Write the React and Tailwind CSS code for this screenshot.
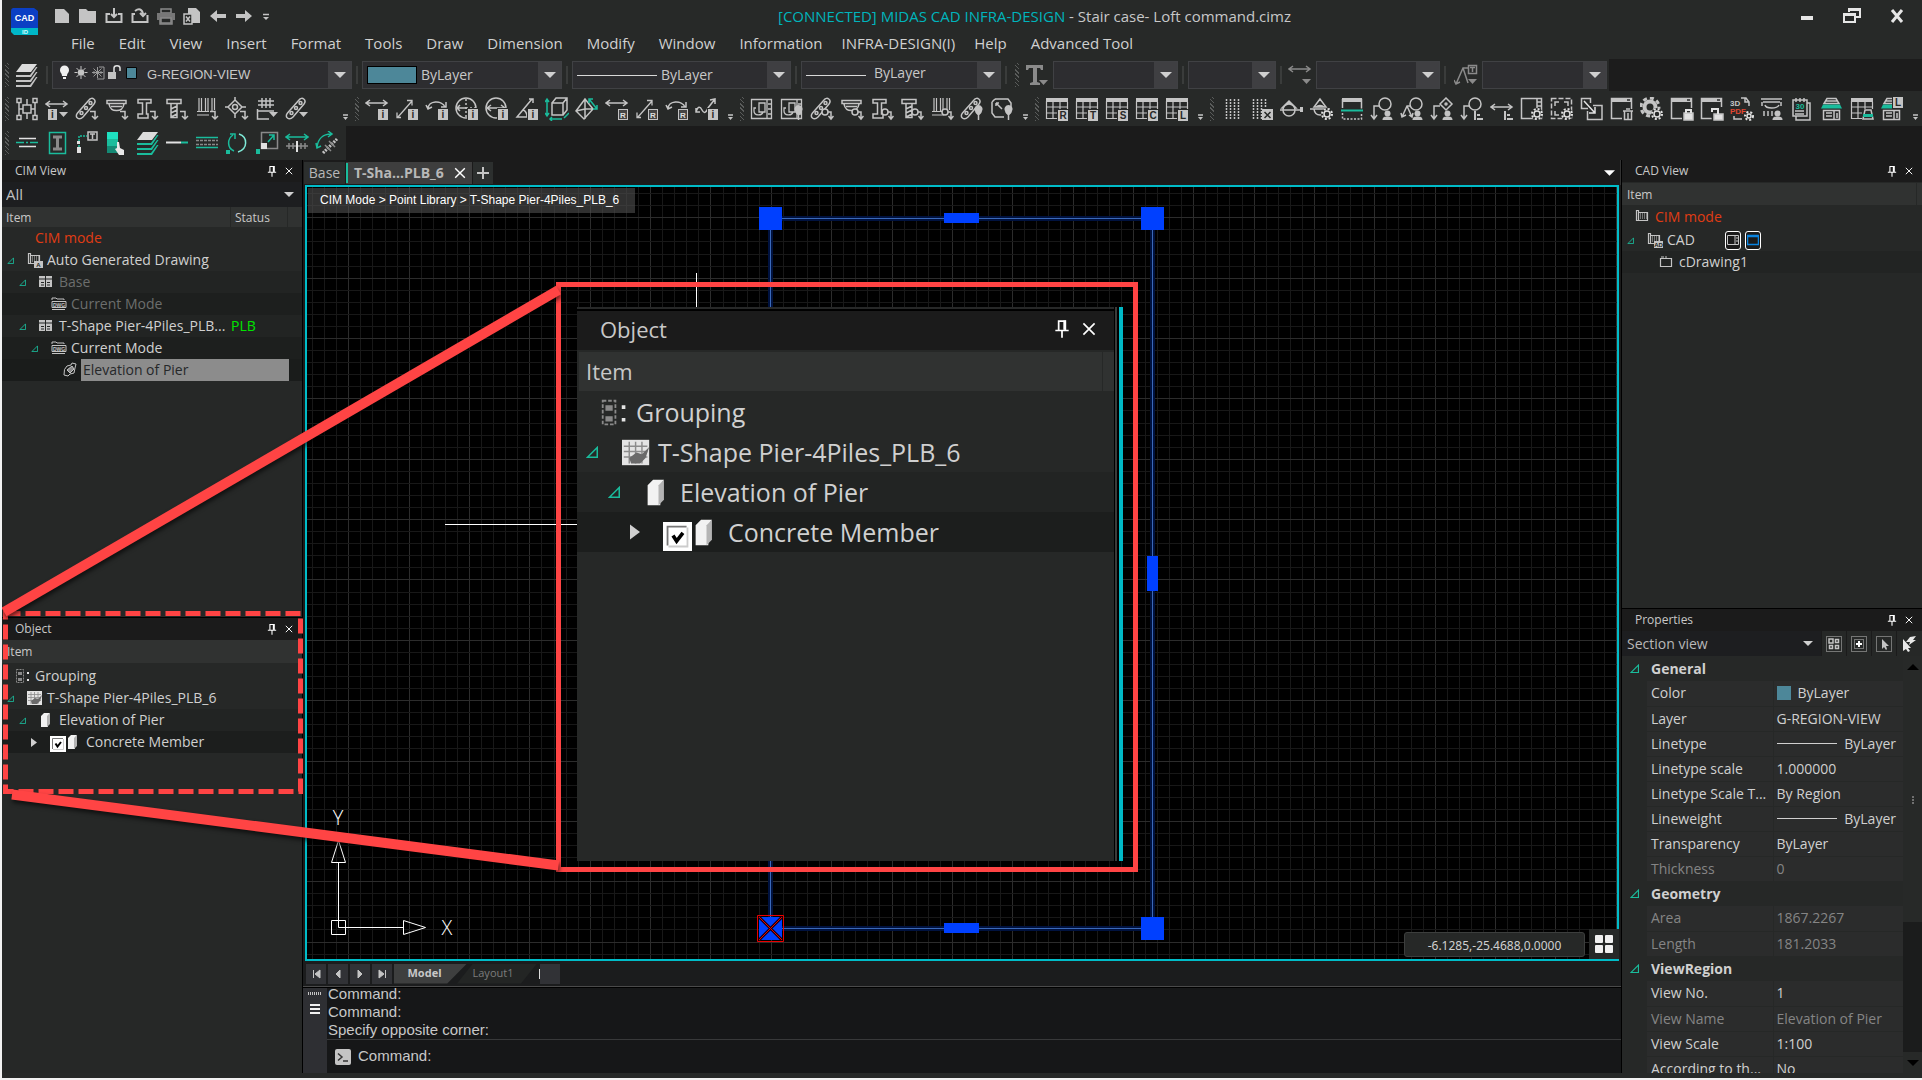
import React, { useState } from 'react';

const TEAL = '#1abc9c';
const GREY = '#c4c4c4';
const DIM = '#8a8a8a';

const Icon = ({ children, className = 'h-6 w-6', box = '0 0 24 24' }) => (
  <svg className={`shrink-0 ${className}`} viewBox={box} fill="none" stroke={GREY} strokeWidth="1.5" aria-hidden="true">
    {children}
  </svg>
);

/* ---------- small pieces shared by the toolbar icons ---------- */

const Hook = () => <path d="M15 14.500h5v7M17 19l3 3 3-3" />;
const DownTri = () => <path d="M14 15h9l-4.500 5z" fill={GREY} stroke="none" />;

const Badge = ({ letter, x = 13, y = 12, w = 10 }) => (
  <g stroke="none">
    <rect x={x - 1} y={y - 1} width={w + 2} height="13" fill="#272928" />
    <rect x={x} y={y} width={w} height="11" fill={GREY} />
    <text x={x + w / 2} y={y + 9} fontSize="10" fontWeight="700" fill="#272928" textAnchor="middle" fontFamily="Liberation Sans, sans-serif">{letter}</text>
  </g>
);

const Outlined = ({ letter }) => (
  <g>
    <rect x="13.5" y="12.500" width="9" height="10" fill="#444" strokeWidth="1" />
    <text x="18" y="20.500" fontSize="8" fontWeight="700" fill="#ddd" stroke="none" textAnchor="middle" fontFamily="Liberation Sans, sans-serif">{letter}</text>
  </g>
);

const Rod = () => (
  <g>
    <path d="M2.500 16 14 3c3-4 8 0 5 4L8 20c-4 4-9 0-5.500-4z" />
    <circle cx="6.500" cy="16" r="1.500" />
    <circle cx="11" cy="11" r="1.500" />
    <circle cx="15.500" cy="6" r="1.500" />
  </g>
);
const Tub = () => <path d="M2 3.500h19v3H2zM4 7c1 5 3 6.500 7.500 6.500S18 12 19 7M6 9.500h11" />;
const Beam = () => <path d="M3 2.500h13v3.500h-4.500v11H13v4H3v-4h4.500V6H3z" />;
const Screw = () => <path d="M2 2.500h14v4H2zM6 7v13.500h6V7M6 12l6-3M6 16l6-3M6 20l6-3" />;
const Piles = () => <path d="M4 1v13M6.500 1v13M10.500 1v13M13 1v13M17 1v13M19.500 1v12M2 14.500h12M2 18h12" strokeWidth="1.2" />;
const Node = () => (
  <g>
    <circle cx="15" cy="15" r="3" fill="#272928" />
    <path d="M18 15h3v6M18.500 19l2.500 3 2.500-3" />
  </g>
);
const Pin = () => (
  <g>
    <path d="M15 14a4 4 0 1 1 7 0c0 2-2 3-2.500 4h-2c-.5-1-2.500-2-2.500-4z" fill={GREY} stroke="none" />
    <path d="M18.500 18v5" />
  </g>
);
const Span = ({ y = 6 }) => <path d={`M1 ${y}h21M5 ${y - 3}l-4 3 4 3M18 ${y - 3}l4 3-4 3`} />;
const Diag = () => <path d="M3 20 17 4M12 3.500h5v5M2 15.500v5h4" strokeWidth="1.3" />;
const ArcArrow = () => <path d="M3 12c0-9 14-9 17-2M1 8l2 4 4-2M21 5v5h-5" />;
const Person = () => (
  <g stroke="none" fill={GREY}>
    <circle cx="17.500" cy="16.500" r="3" />
    <path d="M12.500 23c0-3 2-3.500 5-3.500s5 .5 5 3.500z" />
  </g>
);
const AlignMark = () => <path d="M15 14v9M17 18h3M17 22h6" strokeWidth="2" />;
const MiniGear = ({ x = 17, y = 17, r = 3 }) => (
  <g>
    <circle cx={x} cy={y} r={r + 3} fill="#272928" stroke="none" />
    <circle cx={x} cy={y} r={r} strokeWidth="1.5" stroke="#e2e2e2" />
    <circle cx={x} cy={y} r={r + 2} strokeWidth="2" strokeDasharray="2 1.93" stroke="#e2e2e2" />
  </g>
);
const WindowFrame = () => (
  <g>
    <path d="M1.500 1.500h20v20h-20z" />
    <path d="M1 1h21v4H1z" fill={GREY} stroke="none" />
    <path d="M17 3h3" stroke="#272928" />
  </g>
);
const Trapezoid = () => (
  <g>
    <path d="M7 1.500h9l3 5H4zM6 4h11" />
    <path d="M3 7.500h17l2 4H1z" fill={TEAL} stroke="none" />
    <path d="M3.500 13.500h16v9h-16zM6 16h6M6 19h6M14 14v8M17 16v5" />
  </g>
);
const GridTable = () => (
  <g>
    <path d="M1 1h22v4H1z" fill={GREY} stroke="none" />
    <path d="M1.500 4v17.500H12M1 10h22M1 16h11M8 5v16M15 5v7M22.500 5v8" strokeWidth="1.2" />
  </g>
);
const Dots = () => <path d="M6.500 2v20M10.500 2v20M14.500 2v20M18.500 2v20" strokeDasharray="2 1" strokeWidth="1.5" />;
const Leader = () => <path d="M4 22V9h6M1 18l3 4 3-4" />;

/* ---------- toolbar groups ---------- */

const drawTools = [
  ['Column grid', <path d="M2 1.500h4v4H2zM18 1.500h4v4h-4zM2 18.500h4v4H2zM18 18.500h4v4h-4zM4 6v12M20 6v12M8 8h8v8H8zM4 12h4M16 12h4M12 2v6M12 16v6" />],
  ['Dimension info', <><Span y={7} /><Badge letter="i" x={3} y={12} w={9} /><path d="M14 15h9l-4.500 5z" fill={GREY} stroke="none" /></>],
  ['Rebar', <><Rod /><Hook /></>],
  ['Girder', <><Tub /><Hook /></>],
  ['Steel beam', <><Beam /><Hook /></>],
  ['Anchor', <><Screw /><Hook /></>],
  ['Piles', <><Piles /><Hook /></>],
  ['Bearing', <><path d="M10 3l7 7-7 7-7-7zM10 0v4M10 16v5M0 10h4M16 10h5" /><circle cx="10" cy="10" r="2.500" /><Hook /></>],
  ['Footing', <><path d="M3 4h16M3 8h16M7 1v10M11 1v10M15 1v10M2.500 12v10H14M3 14h16" /><DownTri /></>],
  ['Rebar list', <><Rod /><DownTri /></>],
];

const dimTools = [
  ['Linear', <><Span /><Badge letter="i" /></>],
  ['Aligned', <><Diag /><Badge letter="i" /></>],
  ['Arc', <><ArcArrow /><Badge letter="i" /></>],
  ['Radius', <><circle cx="11" cy="11" r="10" /><path d="M2 11h9M5 8l-3 3 3 3" /><path d="M11 2v18M11 11h10" strokeDasharray="2 2" /><Badge letter="i" /></>],
  ['Diameter', <><circle cx="11" cy="11" r="10" /><path d="M2 11h18M6 8l-4 3 4 3M16 8l4 3-4 3" /><Badge letter="i" /></>],
  ['Angle', <><path d="M17 2 2 20h20M8 13c3 1 4 3 4 7M14 2h4v4" /><Badge letter="i" /></>],
  ['Solid box', <><path d="M7 6h11v12H7zM7 6l4-5h11v12l-4 5M18 6l4-5" /><path d="M2 3v15M0 5l2-3 2 3M0 16l2 3 2-3M5 22h12M19 21l5-5M7 20l-2 2 2 2" stroke={TEAL} /></>],
  ['Pyramid', <><path d="M10 2 1 14l8 8 9-10zM10 2v20M1 14l9-2 8 0" /><path d="M14 2l8 10M14 6V2h4M22 8v4h-4" stroke={TEAL} /></>],
  ['Linear R', <><Span /><Outlined letter="R" /></>],
  ['Aligned R', <><Diag /><Outlined letter="R" /></>],
  ['Arc R', <><ArcArrow /><Outlined letter="R" /></>],
  ['Spline', <><path d="M1 15c2-6 4-6 6-2s4 3 6-2l7-9M15 3l5-1v5M1 11v4h4" /><Badge letter="i" /></>],
];

const Layered = () => <path d="M1.500 2.500h20v19h-20zM17 3v18M9 6h6v9H9zM6 11H4v3c0 5 8 5 9 1M18 7h3M18 12h3M18 17h3" strokeWidth="1.3" />;

const modelTools = [
  ['Section', <Layered />],
  ['Section pin', <><Layered /><Pin /></>],
  ['Rebar node', <><Rod /><Node /></>],
  ['Girder node', <><Tub /><Node /></>],
  ['Beam node', <><Beam /><Node /></>],
  ['Anchor node', <><Screw /><Node /></>],
  ['Pile node', <><Piles /><Node /></>],
  ['Rebar pin', <><Rod /><Pin /></>],
  ['Frame pin', <><path d="M5 2h13l3 4v5M2 5v11l3 4h9M2 5l3-3M6 6l6 6M6 6h3M6 6v3" /><Pin /></>],
];

const tableTools = ['R', 'T', 'S', 'C', 'L'].map((letter) => [
  `Table ${letter}`,
  <><GridTable /><Badge letter={letter} x={13} y={13} w={10} /></>,
]);

const Eye = () => <path d="M10 2 4 10h12zM0 12h20M4 12c1 8 11 8 12 0M6 10c2-2 6-2 8 0" />;

const viewTools = [
  ['Hatch dots', <Dots />],
  ['Hatch dots off', <><path d="M3.500 2v20M7.500 2v20M11.500 2v20M15.500 2v9" strokeDasharray="2 1" /><rect x="12" y="12" width="11" height="11" fill={GREY} stroke="none" /><path d="M14.500 15l6 6M20.500 15l-6 6" stroke="#272928" /></>],
  ['Look', <><path d="M9 4 2 11h14z" fill={GREY} /><circle cx="9" cy="13" r="6" fill="#272928" /><path d="M0 13h20" /><path d="M20 10h3v5h-3z" fill={GREY} stroke="none" /></>],
  ['Look settings', <><Eye /><MiniGear /></>],
  ['Cut', <><path d="M2.500 2.500h19v9M2.500 2v9" /><path d="M2 1h20v4H2z" fill={GREY} stroke="none" /><path d="M1 13.500h22" stroke={TEAL} strokeWidth="2" /><path d="M2.500 16v6h19v-6" strokeDasharray="2 1.500" /></>],
  ['Leader', <><circle cx="15" cy="7" r="6" /><Leader /><Person /></>],
  ['Multi leader', <><circle cx="16" cy="7" r="6" /><path d="M2 20 7 9h3M7 9l5 11M1 16l1 4 4-2M9 18l3 2 1-4" /><Person /></>],
  ['Diamond leader', <><path d="M16 1l6 6-6 6-6-6z" /><circle cx="16" cy="7" r="1" /><Leader /><Person /></>],
  ['Leader align', <><circle cx="15" cy="7" r="6" /><Leader /><AlignMark /></>],
  ['Span align', <><Span y={10} /><AlignMark /></>],
  ['Window settings', <><path d="M1.500 1.500h20v20h-20zM17 2v19M17 5h5M17 9h5" /><MiniGear /></>],
  ['Frame settings', <><path d="M1.500 1.500h20v20h-20z" strokeDasharray="5 2" /><path d="M5 9V5h4M14 5h4v4M5 14v4h4" /><MiniGear /></>],
  ['Resize', <><path d="M8 11.500H1.500v-10h9V6M13 8.500h9v14H7.500V14" /><path d="M4 4l11 12M15 10v6H9" stroke="#e2e2e2" /></>],
  ['Delete window', <><WindowFrame /><path d="M12 12h12v12H12z" fill="#272928" stroke="none" /><path d="M13 14h10M14.500 14v8.500h7V14M18 16v6M16 12h4" /></>],
  ['Options', <><circle cx="10" cy="10" r="5.500" strokeWidth="4" /><circle cx="10" cy="10" r="9" strokeWidth="3" strokeDasharray="4 3" /><MiniGear /></>],
  ['Lock', <><WindowFrame /><path d="M12 11h12v13H12z" fill="#272928" stroke="none" /><path d="M14 16h9v7h-9z" fill="#e2e2e2" /><path d="M16 16v-3h5v3" stroke="#e2e2e2" strokeWidth="2" /></>],
  ['Unlock', <><WindowFrame /><path d="M10 10h14v14H12z" fill="#272928" stroke="none" /><path d="M14 17h9v6h-9z" fill="#e2e2e2" /><path d="M12 15v-3h6v5" stroke="#e2e2e2" strokeWidth="2" /></>],
  ['3D PDF', <><path d="M11 1h5l3 4v4M4 19v3h8M15 1v4h4" /><g stroke="none" fontWeight="700" fontFamily="Liberation Sans, sans-serif"><text x="0" y="9" fontSize="8" fill={GREY}>3D</text><text x="0" y="17" fontSize="8" fill="#e0452f">PDF</text></g><MiniGear x={19} y={19} r={2} /></>],
  ['Deck', <><path d="M1 2h21M3 5h17M5 8c1 4 12 4 14 0M2 5v4M21 5v4M4 14v5M8 14v5M12 14v5" /><Person /></>],
  ['Schedule', <><path d="M3 3h14v16H3zM17 6h3v17H6v-4M6 1v4M10 1v4M14 1v4M5 14h9M5 17h9" /><text x="10" y="12" fontSize="8" fontWeight="700" fill={TEAL} stroke="none" textAnchor="middle" fontFamily="Liberation Sans, sans-serif">30</text></>],
  ['Drawing', <Trapezoid />],
  ['Drawing table', <><GridTable /><path d="M12 12h12v12H12z" fill="#272928" stroke="none" /><path d="M15 13h6l2 9H13z" /><path d="M13 17h10v3H13z" fill={TEAL} stroke="none" /></>],
  ['Drawing layout', <><Trapezoid /><Badge letter="L" x={13} y={0} w={10} /></>],
];

const Sheets = ({ edge = GREY }) => (
  <g stroke="none">
    <path d="M8 1h15l-6 8H2z" fill="#dcdcdc" />
    <path d="M2 12h14l6-8h1.500L17 14H2z" fill={edge} />
    <path d="M2 17h14l6-8h1.500L17 19H2z" fill={edge} />
    <path d="M2 22h14l6-8h1.500L17 24H2z" fill={edge} />
  </g>
);

const editTools = [
  ['Break line', <><path d="M4 7.500h17M4 15.500h17" stroke="#e2e2e2" /><path d="M1 11.500h8M11 11.500h2M15 11.500h8" stroke={TEAL} /></>],
  ['Beam frame', <><path d="M4.500 1.500h16v21h-16z" stroke={TEAL} /><path d="M8 6h9M8 18h9M12.500 6v12" stroke={DIM} strokeWidth="3" /></>],
  ['Text leader', <><path d="M4 16V5h8" stroke={TEAL} strokeDasharray="2 1" /><path d="M2 16h4v6H2zM2 10h3v3H2z" fill="#e2e2e2" stroke="none" /><path d="M13 1h9v8h-9zM15 3h5M17.500 3v5" /></>],
  ['Palette', <><path d="M2 1h11v7H2z" fill="#1fe0c0" stroke="none" /><path d="M2 8h11v7H2z" fill="#1abc9c" stroke="none" /><path d="M2 15h11v7H2z" fill="#148a75" stroke="none" /><path d="M12 11l2 0 1 6 4 2v5h-5l-4-6 2-1z" fill="#e8e8e8" stroke="none" /></>],
  ['Layer sheets', <Sheets edge={TEAL} />],
  ['Join', <><path d="M1 11.500h15" stroke="#e2e2e2" strokeWidth="2" /><path d="M16 11.500h7" stroke={TEAL} strokeWidth="2" /></>],
  ['Multi line', <><path d="M1 6.500h22M1 16.500h22" stroke={TEAL} /><path d="M1 9.500h22M1 13.500h22" stroke={DIM} strokeDasharray="3 1" /></>],
  ['Rotate', <><path d="M8 4C2 8 2 17 9 20M5 3h5v5" stroke={TEAL} /><path d="M14 3c9 3 9 15-1 18" stroke="#7fead8" /><path d="M1 19h4v4H1z" fill={TEAL} stroke="none" /></>],
  ['Scale', <><path d="M6.500 1.500h16v16h-16z" stroke={DIM} /><path d="M13 11l6-7M14 4h5v5" stroke={TEAL} /><path d="M6 12h6v6H6z" fill="#e2e2e2" stroke="none" /><path d="M1 18h4v5H1z" fill={TEAL} stroke="none" /></>],
  ['Stretch', <><path d="M1 6h22M5 3 1 6l4 3M19 3l4 3-4 3" stroke={TEAL} /><path d="M1 15h22M4 12v6M8 12v6M16 12v6M20 12v6" stroke={DIM} /><path d="M12 10v11" stroke="#e2e2e2" strokeWidth="2" /></>],
  ['Stretch angle', <><path d="M2 16C3 8 8 3 16 3M13 0l4 3-4 3M1 12l1 5 4-2" stroke={TEAL} /><path d="M8 22 22 8" stroke={GREY} strokeWidth="3" strokeDasharray="2 1" /><path d="M10 14l6 6M14 10l6 6" stroke={DIM} /></>],
];

const Grip = () => (
  <span className="h-6 w-1 shrink-0 bg-[repeating-linear-gradient(45deg,#5a5c5b_0_1px,transparent_1px_3px)]" />
);

const ToolGroup = ({ tools, overflow = true, wide = false }) => (
  <div className="flex shrink-0 items-center gap-1.5 pr-[5px]" role="toolbar">
    <Grip />
    {tools.map(([name, art]) => (
      <button key={name} type="button" aria-label={name} className="h-6 w-6 shrink-0">
        <Icon>{art}</Icon>
      </button>
    ))}
    {overflow && (
      <button type="button" aria-label="More" className={`flex h-6 w-2.5 items-end justify-center ${wide ? 'ml-[25px]' : ''}`}>
        <Icon className="h-2.5 w-2.5" box="0 0 10 10">
          <path d="M3 4h5" />
          <path d="M3 6h5L5.500 9z" fill={GREY} stroke="none" />
        </Icon>
      </button>
    )}
  </div>
);

/* ---------- title bar, menu, combos ---------- */

const quickTools = [
  ['New', <path d="M2 2h9l5 5v9H2z" fill={GREY} stroke="none" />],
  ['Open', <path d="M0 2h7l2 2h8v12H0z" fill={GREY} stroke="none" />],
  ['Import', <path d="M5 7H1.500v8h15V7H13M9 1v9M6 7l3 3 3-3" strokeWidth="2" />],
  ['Export', <path d="M4 7H1.500v8h15V8M4 4c4-3 7-2 8 3M9 6l3 3 3-3" strokeWidth="2" />],
  ['Print', <><path d="M4 2h10v4H4zM3 12h12v5H3z" stroke={DIM} /><path d="M0 6h18v7H0z" fill="#777" stroke="none" /><path d="M4 11h10v5H4z" fill="#272928" stroke={DIM} /></>],
  ['Export sheet', <><path d="M5 1h8l4 4v11H5z" fill={GREY} stroke="none" /><path d="M1 7h8v10H1z" fill="#272928" /><path d="M3 9.500l4 5M7 9.500l-4 5" /></>],
  ['Undo', <path d="M1 9l7-6v4h9v4H8v4z" fill={GREY} stroke="none" />],
  ['Redo', <path d="M17 9l-7-6v4H1v4h9v4z" fill={GREY} stroke="none" />],
];

const menus = [
  { name: 'File' },
  { name: 'Edit' },
  { name: 'View' },
  { name: 'Insert' },
  { name: 'Format' },
  { name: 'Tools' },
  { name: 'Draw' },
  { name: 'Dimension' },
  { name: 'Modify' },
  { name: 'Window' },
  { name: 'Information' },
  { name: 'INFRA-DESIGN(I)', tight: true },
  { name: 'Help' },
  { name: 'Advanced Tool' },
];

const TitleBar = () => (
  <header className="flex h-[59px] shrink-0 font-['Open_Sans','Noto_Sans',sans-serif]">
    <svg className="ml-[7px] mt-2 h-7 w-8 shrink-0" viewBox="0 0 32 28" aria-hidden="true">
      <path d="M4 0h21l4 3v18H2V3a3 3 0 0 1 2-3z" fill="#0b3fc4" />
      <path d="M2 20h27v7H5l-3-3z" fill="#00b7c8" />
      <text x="15.500" y="13" fontSize="9" fontWeight="700" fill="#fff" textAnchor="middle" fontFamily="Liberation Sans, sans-serif">CAD</text>
      <text x="16" y="26" fontSize="6" fontWeight="700" fill="#d8ffff" textAnchor="middle" fontFamily="Liberation Sans, sans-serif">ID</text>
    </svg>
    <div className="flex min-w-0 flex-1 flex-col pl-3">
      <div className="flex h-8 items-center">
        <div className="flex items-center gap-2">
          {quickTools.map(([name, art]) => (
            <button key={name} type="button" aria-label={name}>
              <Icon className="h-[18px] w-[18px]" box="0 0 18 18">{art}</Icon>
            </button>
          ))}
          <Icon className="h-2.5 w-2.5" box="0 0 10 10">
            <path d="M2 3.500h6" />
            <path d="M2 6h6L5 9z" fill={GREY} stroke="none" />
          </Icon>
        </div>
        <h1 className="flex-1 truncate text-center text-[15px] leading-6 text-[#c8c8c8]">
          <span className="text-[#00b4bc]">[CONNECTED] MIDAS CAD INFRA-DESIGN</span> - Stair case- Loft command.cimz
        </h1>
        <div className="flex items-center gap-[27px] pr-4">
          <button type="button" aria-label="Minimize">
            <Icon className="h-[18px] w-[18px]" box="0 0 18 18"><path d="M3 11h12" stroke="#e6e6e6" strokeWidth="4" /></Icon>
          </button>
          <button type="button" aria-label="Restore">
            <Icon className="h-[18px] w-[18px]" box="0 0 18 18">
              <path d="M6 5V2h11v8h-4M1 7h11v8H1zM1 8h11M6 3h11" stroke="#e6e6e6" strokeWidth="2" />
            </Icon>
          </button>
          <button type="button" aria-label="Close">
            <Icon className="h-[18px] w-[18px]" box="0 0 18 18"><path d="M4 3l10 12M14 3 4 15" stroke="#e6e6e6" strokeWidth="3" /></Icon>
          </button>
        </div>
      </div>
      <nav className="-mt-px flex items-center pl-1.5">
        {menus.map(({ name, tight }) => (
          <button key={name} type="button" className={`text-[15px] leading-6 whitespace-nowrap text-[#d0d0d0] ${tight ? 'px-[7px]' : 'px-3'}`}>
            {name}
          </button>
        ))}
      </nav>
    </div>
  </header>
);

const Sep = () => <span className="mx-1 h-[18px] w-0.5 shrink-0 bg-[#3a3c3b]" />;

const Combo = ({ label, value = '', width, children, font = 'text-sm' }) => (
  <label className={`flex h-7 shrink-0 items-center border border-[#404144] bg-[#2d2d30] ${width}`}>
    {children}
    <select aria-label={label} className={`min-w-0 flex-1 appearance-none bg-transparent text-[#c8c8c8] outline-none ${font}`}>
      <option>{value}</option>
    </select>
    <span className="flex h-full w-[23px] shrink-0 items-center justify-center bg-[#3f3f42]">
      <svg className="h-1.5 w-3" viewBox="0 0 12 6" aria-hidden="true"><path d="M0 0h12L6 6z" fill="#d0d0d0" /></svg>
    </span>
  </label>
);

const ComboBar = () => (
  <div className="flex h-8 shrink-0 items-center pl-[3px] font-['Open_Sans','Noto_Sans',sans-serif]">
    <Grip />
    <button type="button" aria-label="Layer properties" className="mr-1 ml-[5px] h-6 w-6"><Icon><Sheets /></Icon></button>
    <Sep />
    <Combo label="Layer" value="G-REGION-VIEW" width="w-[300px]" font="pl-1.5 text-[13px] font-['Liberation_Sans',sans-serif]">
      <Icon className="-mt-1 ml-1 h-[18px] w-[84px]" box="0 0 84 18">
        <path d="M3 6a4.500 4.500 0 1 1 9 0c0 3-2 3-2 6H5c0-3-2-3-2-6zM6 13h3v2H6z" fill="#f0f0f0" stroke="none" />
        <circle cx="24" cy="8.500" r="2.500" fill={GREY} />
        <path d="M24 2v3M24 12v3M17.500 8.500h3M27.500 8.500h3M19.500 4l2 2M26.500 11l2 2M28.500 4l-2 2M21.500 11l-2 2" strokeWidth="1" />
        <path d="M35 8.500h11M40.500 3v11M36.500 4.500l8 8M44.500 4.500l-8 8M42 3h5v12h-7M37 7v3M44 7v3" strokeWidth="1" stroke="#9a9a9a" />
        <path d="M51 8h8v7h-8z" fill={GREY} stroke="none" />
        <path d="M57 8V4c0-3 6-3 6 0v3" stroke="#e2e2e2" />
        <path d="M69.500 3.500h10v11h-10z" fill="#4d8799" stroke="#050505" strokeWidth="1" />
      </Icon>
    </Combo>
    <Sep />
    <Combo label="Color" value="ByLayer" width="w-[200px]" font="pl-1 text-sm">
      <span className="ml-1 h-[18px] w-[50px] shrink-0 border border-black bg-[#4d8799]" />
    </Combo>
    <Sep />
    <Combo label="Linetype" value="ByLayer" width="w-[219px]" font="pl-1 text-sm">
      <span className="ml-1 h-px w-20 shrink-0 bg-[#d8d8d8]" />
    </Combo>
    <Sep />
    <Combo label="Lineweight" value="ByLayer" width="w-[200px]" font="pb-1 pl-2 text-sm">
      <span className="ml-1 h-px w-[60px] shrink-0 bg-[#d8d8d8]" />
    </Combo>
    <Sep />
    <span className="ml-1 flex"><Grip /></span>
    <button type="button" aria-label="Text style" className="mr-1 ml-1.5 h-6 w-6">
      <Icon>
        <path d="M1 2h17v5h-2l-1-2h-3v14l3 1v2H5v-2l3-1V5H4L3 7H1z" fill={DIM} stroke="none" />
        <path d="M14 17h9l-4.500 5z" fill={DIM} stroke="none" />
      </Icon>
    </button>
    <Combo label="Text style" width="w-[125px]" />
    <Sep />
    <Combo label="Text height" width="w-[88px]" />
    <Sep />
    <button type="button" aria-label="Dimension style" className="mr-1 ml-0.5 h-6 w-6">
      <Icon><g stroke={DIM}><Span y={6} /></g><path d="M14 16h9l-4.500 5z" fill={DIM} stroke="none" /></Icon>
    </button>
    <Combo label="Dimension style" width="w-[124px]" />
    <Sep />
    <button type="button" aria-label="Leader style" className="mx-1 h-6 w-6">
      <Icon>
        <path d="M2 21 9 5h6M9 5l5 15M0 17l2 4 4-2" stroke={DIM} />
        <path d="M14.500 2.500h8v8h-8zM16 4.500h5M18.500 4v5" stroke={DIM} />
        <path d="M14 16h9l-4.500 5z" fill={DIM} stroke="none" />
      </Icon>
    </button>
    <Combo label="Leader style" width="w-[125px]" />
    <span className="ml-0.5 flex-1 self-stretch bg-[#1c1c1c]" />
  </div>
);

/* ---------- panels ---------- */

const PinIcon = ({ className }) => (
  <svg className={className} viewBox="0 0 12 14" fill="none" stroke="#fff" aria-hidden="true">
    <path d="M3.500 8V1.500h5V8M1 8.500h10M6 9v5" strokeWidth="1.3" />
    <path d="M8 1v7" strokeWidth="2" />
  </svg>
);
const CrossIcon = ({ className }) => (
  <svg className={className} viewBox="0 0 10 10" fill="none" stroke="#fff" strokeWidth="1.2" aria-hidden="true">
    <path d="M1 1l8 8M9 1 1 9" />
  </svg>
);

const PanelTitle = ({ children }) => (
  <div className="flex h-[22px] shrink-0 items-center bg-[#1b1b1b] pr-[9px] pl-[13px] text-xs text-[#c8c8c8]">
    <h2 className="flex-1">{children}</h2>
    <button type="button" aria-label="Pin panel" className="mr-2"><PinIcon className="h-3 w-2.5" /></button>
    <button type="button" aria-label="Close panel"><CrossIcon className="h-2 w-2" /></button>
  </div>
);

const Expander = ({ className = 'h-[7px] w-[7px]' }) => (
  <svg className={className} viewBox="0 0 8 8" fill="none" stroke={TEAL} aria-hidden="true">
    <path d="M1 7.500 7.500 1v6.500z" />
  </svg>
);

const Slot = ({ open, large }) => (
  <span className={`shrink-0 ${large ? 'w-9' : 'w-5'}`}>{open && <Expander className={large ? 'h-3 w-3' : 'h-[7px] w-[7px]'} />}</span>
);

const SheetIcon = ({ tag }) => (
  <Icon className="mr-1 h-4 w-4" box="0 0 16 16">
    <path d="M3.500 11.500h-2V1.500h2v10h9v-8h-9" strokeWidth="1.2" />
    <path d="M5 5h7M5 7h7M5 9h7" strokeWidth="1" strokeDasharray="1 1" />
    {tag && <rect x="7" y="9" width="9" height="7" fill={GREY} stroke="none" />}
    {tag && <text x="11.500" y="15" fontSize="6" fontWeight="700" fill="#222" stroke="none" textAnchor="middle" fontFamily="Liberation Sans, sans-serif">{tag}</text>}
  </Icon>
);
const TableIcon = ({ color = GREY }) => (
  <Icon className="mr-1 h-4 w-4" box="0 0 16 16">
    <rect x="0" y="2" width="13" height="11" fill={color} stroke="none" />
    <path d="M6.500 2v11M0 5h13M2 8.500h3M8 8.500h3M2 11h3M8 11h3" stroke="#232524" strokeWidth="1" />
  </Icon>
);
const DwgIcon = () => (
  <Icon className="mr-1 h-4 w-4" box="0 0 16 16">
    <path d="M1 4V2h4l1 1h7v1M1 13.500h13M1 5.500h14v6H1z" strokeWidth="1" />
    <text x="8" y="10.500" fontSize="5" fontWeight="700" fill={GREY} stroke="none" textAnchor="middle" fontFamily="Liberation Sans, sans-serif">DWG</text>
  </Icon>
);
const SectionIcon = () => (
  <Icon className="mr-1 h-4 w-4" box="0 0 16 16">
    <path d="M1.500 7.500 4 4l4-1 1-2 4 1-1 4-1 5-4 1-2 2-4-1z" strokeWidth="1" />
    <path d="M4 8l5-4 2 3-4 4z" fill={DIM} strokeWidth="1" />
  </Icon>
);

const CimView = () => (
  <section className="flex min-h-0 flex-1 flex-col">
    <PanelTitle>CIM View</PanelTitle>
    <label className="flex h-[25px] shrink-0 items-center bg-[#1d1e20] pr-2 pl-1">
      <select aria-label="Filter" className="flex-1 appearance-none bg-transparent text-[15px] text-[#c0c0c0] outline-none"><option>All</option></select>
      <svg className="h-[5px] w-2.5" viewBox="0 0 10 5" aria-hidden="true"><path d="M0 0h10L5 5z" fill="#d0d0d0" /></svg>
    </label>
    <div className="flex h-5 shrink-0 bg-[#303231] text-xs leading-[22px] text-[#c8c8c8]">
      <span className="flex-1 pl-1">Item</span>
      <span className="w-[58px] border-x border-[#262827] pl-1">Status</span>
      <span className="w-[14px]" />
    </div>
    <ul className="text-sm leading-[22px] whitespace-nowrap text-[#d0d0d0]">
      <li className="flex h-[22px] items-center pl-[33px] text-[#e03c14]">CIM mode</li>
      <li className="flex h-[22px] items-center pl-[5px]"><Slot open /><SheetIcon tag="A" />Auto Generated Drawing</li>
      <li className="flex h-[22px] items-center bg-[#222423] pl-[17px] text-[#6c6e6d]"><Slot open /><TableIcon />Base</li>
      <li className="flex h-[22px] items-center bg-[#1d1f1e] pl-[29px] text-[#6c6e6d]"><Slot /><DwgIcon />Current Mode</li>
      <li className="flex h-[22px] items-center bg-[#222423] pl-[17px]">
        <Slot open /><TableIcon />
        <span className="w-[172px]">T-Shape Pier-4Piles_PLB...</span>
        <span className="text-[#00e400]">PLB</span>
      </li>
      <li className="flex h-[22px] items-center bg-[#1d1f1e] pl-[29px]"><Slot open /><DwgIcon />Current Mode</li>
      <li className="flex h-[22px] items-center bg-[#1a1c1b] pr-[13px] pl-[41px]">
        <Slot /><SectionIcon />
        <span className="-ml-0.5 flex-1 bg-[#8c8c8c] pl-0.5 text-[#26282a]">Elevation of Pier</span>
      </li>
    </ul>
  </section>
);

/* ---------- object tree, used docked and enlarged ---------- */

const GroupIcon = ({ className }) => (
  <Icon className={className} box="0 0 16 16">
    <path d="M1.500 1.500h7v13h-7z" stroke={DIM} strokeWidth="1" strokeDasharray="2 1" />
    <path d="M3 4h4v3H3zM3 10h4v3H3z" fill={DIM} stroke="none" />
    <path d="M12 4h2v2h-2zM12 11h2v2h-2z" fill="#e4e4e4" stroke="none" />
  </Icon>
);
const PlanIcon = ({ className }) => (
  <Icon className={className} box="0 0 16 16">
    <path d="M0 1h15v14H0z" fill="#e4e4e4" stroke="none" />
    <path d="M1 4.500h13M1 7.500h13M1 10.500h13M4 2v12M7.500 2v12M11 2v12" stroke="#8c8c8c" strokeWidth=".8" />
    <path d="M5 14l-1-3 4-3 3 1 4-4-2 6-3 3z" fill="#6a6a6a" stroke="none" />
  </Icon>
);
const SolidIcon = ({ className }) => (
  <Icon className={className} box="0 0 16 16">
    <path d="M2 4l3-3h6l-2 3v11H2z" fill="#f2f2f2" stroke="none" />
    <path d="M8 4l3-3v11l-3 3z" fill="#b4b4b4" stroke="none" />
  </Icon>
);

const VisibleBox = ({ large }) => {
  const [checked, setChecked] = useState(true);
  return (
    <span className={`relative shrink-0 ${large ? 'top-1 h-[29px] w-[29px]' : 'top-0.5 h-4 w-4'}`}>
      <input
        type="checkbox"
        aria-label="Show Concrete Member"
        checked={checked}
        onChange={() => setChecked(!checked)}
        className="block h-full w-full appearance-none bg-white"
      />
      <svg className="pointer-events-none absolute inset-0 h-full w-full" viewBox="0 0 16 16" fill="none" aria-hidden="true">
        <path d="M2.500 13V2.500H13" stroke="#777" />
        <path d="M13.500 3v10.500H3" stroke="#ccc" />
        {checked && <path d="M5.500 7.500l2 3L11 6" stroke="#000" strokeWidth="2" />}
      </svg>
    </span>
  );
};

const ObjectTree = ({ large = false }) => {
  const row = large ? 'flex h-10 items-center' : 'flex h-[22px] items-center';
  const icon = large ? 'mr-[7px] h-[29px] w-[29px]' : 'mr-1 h-4 w-4';
  return (
    <ul className={`whitespace-nowrap text-[#d0d0d0] ${large ? 'pt-px text-[25px] leading-10' : 'pt-0.5 text-sm leading-[22px]'}`}>
      <li className={`${row} ${large ? 'pl-[23px]' : 'pl-[13px]'}`}><GroupIcon className={icon} />Grouping</li>
      <li className={`${row} ${large ? 'pl-[9px]' : 'pl-[5px]'}`}><Slot open large={large} /><PlanIcon className={icon} />T-Shape Pier-4Piles_PLB_6</li>
      <li className={`${row} bg-[#222423] ${large ? 'pl-[31px]' : 'pl-[17px]'}`}><Slot open large={large} /><SolidIcon className={icon} />Elevation of Pier</li>
      <li className={`${row} bg-[#1c1e1d] ${large ? 'pl-[53px]' : 'pl-[29px]'}`}>
        <span className={`shrink-0 ${large ? 'w-[33px]' : 'w-[19px]'}`}>
          <svg className={large ? 'h-4 w-2.5' : 'h-[9px] w-[6px]'} viewBox="0 0 6 9" aria-hidden="true"><path d="M0 0l6 4.500L0 9z" fill="#d0d0d0" /></svg>
        </span>
        <VisibleBox large={large} />
        <SolidIcon className={icon} />
        Concrete Member
      </li>
    </ul>
  );
};

const ObjectPanel = () => (
  <section className="flex h-[456px] shrink-0 flex-col border-t border-black">
    <PanelTitle>Object</PanelTitle>
    <div className="h-[23px] shrink-0 bg-[#303231] pl-[5px] text-xs leading-6 text-[#c8c8c8]">Item</div>
    <ObjectTree />
  </section>
);

const EnlargedObject = () => (
  <section className="absolute top-[307px] left-[577px] flex h-[554px] w-[546px] bg-black" aria-label="Object panel, enlarged">
    <div className="flex flex-1 flex-col border-t-2 border-[#272828] bg-[#262827]">
      <div className="flex h-[41px] shrink-0 items-center border-t-2 border-black bg-[#1b1b1b] pr-[18px] pb-1 pl-[23px] text-[22px] leading-8 text-[#c8c8c8]">
        <h2 className="flex-1">Object</h2>
        <PinIcon className="mr-3 h-[19px] w-4" />
        <CrossIcon className="h-3.5 w-3.5" />
      </div>
      <div className="mt-0.5 ml-0.5 flex h-[39px] shrink-0 bg-[#303231] pl-[7px] text-[22px] leading-[38px] text-[#c8c8c8]">
        <span className="mr-[11px] flex-1 border-r border-[#262827]">Item</span>
      </div>
      <ObjectTree large />
    </div>
    <span className="mr-0.5 ml-px w-0.5 bg-[#3a3c3b]" />
    <span className="w-1 bg-[#00b9c6]" />
  </section>
);

/* ---------- right column ---------- */

const CadView = () => (
  <section className="flex min-h-0 flex-1 flex-col">
    <PanelTitle>CAD View</PanelTitle>
    <div className="mt-px flex h-[22px] shrink-0 bg-[#303231] pl-[5px] text-xs leading-6 text-[#c8c8c8]">
      <span className="mr-[5px] flex-1 border-r border-[#262827]">Item</span>
    </div>
    <ul className="text-sm leading-[22px] text-[#d0d0d0]">
      <li className="flex h-6 items-center pl-[13px] text-[#e03c14]"><SheetIcon />CIM mode</li>
      <li className="flex h-[22px] items-center pl-[5px]">
        <Slot open /><SheetIcon tag="AD" />CAD
        <button type="button" aria-label="Dock view" className="ml-[30px] flex h-[19px] w-4 items-center justify-center rounded-[3px] border border-white bg-[#1b1b1b]">
          <Icon className="h-3 w-3" box="0 0 12 12"><path d="M.5 1.500h11v9H.5zM8 2v8M9 4h2M9 7h2" strokeWidth="1" /></Icon>
        </button>
        <button type="button" aria-label="Window view" className="ml-1 flex h-[19px] w-4 items-center justify-center rounded-[3px] border border-white bg-[#1b1b1b]">
          <Icon className="h-3 w-3" box="0 0 12 12"><path d="M.5 1.500h11v9H.5zM0 2.500h12" stroke="#0a84e0" strokeWidth="1.5" /></Icon>
        </button>
      </li>
      <li className="flex h-[22px] items-center bg-[#222423] pl-[37px]">
        <Icon className="mr-1 h-4 w-4" box="0 0 16 16"><path d="M1.500 4.500h11v8h-11zM2 3h3M6 3h2" strokeWidth="1.2" /></Icon>
        cDrawing1
      </li>
    </ul>
  </section>
);

const ByLayerLine = () => (
  <span className="flex items-center justify-between pr-[7px]">
    <span className="h-px w-[60px] bg-[#d0d0d0]" />
    ByLayer
  </span>
);

const propertyGroups = [
  {
    title: 'General',
    rows: [
      ['Color', <span className="flex items-center gap-[7px]"><span className="h-[14px] w-[14px] bg-[#4d8799]" />ByLayer</span>],
      ['Layer', 'G-REGION-VIEW'],
      ['Linetype', <ByLayerLine />],
      ['Linetype scale', '1.000000'],
      ['Linetype Scale T...', 'By Region'],
      ['Lineweight', <ByLayerLine />],
      ['Transparency', 'ByLayer'],
      ['Thickness', '0', true],
    ],
  },
  { title: 'Geometry', rows: [['Area', '1867.2267', true], ['Length', '181.2033', true]] },
  {
    title: 'ViewRegion',
    rows: [
      ['View No.', '1'],
      ['View Name', 'Elevation of Pier', true],
      ['View Scale', '1:100'],
      ['According to th...', 'No'],
    ],
  },
];

const selectTools = [
  ['Quick select', <><path d="M1.500 1.500h15v15h-15z" strokeDasharray="1 1" strokeWidth="1" /><path d="M4 4h4v4H4zM10.500 4.500h3v3h-3zM4.500 10.500h3v3h-3zM10.500 10.500h3v3h-3z" /></>],
  ['Add to selection', <><path d="M1.500 1.500h15v15h-15zM4.500 4.500h9v9h-9z" strokeDasharray="1 1" strokeWidth="1" /><path d="M9 6v6M6 9h6" stroke="#fff" strokeWidth="2" /></>],
  ['Select objects', <><path d="M1.500 1.500h15v15h-15z" strokeDasharray="1 1" strokeWidth="1" /><path d="M7 4v10l2-2 2 3 1-1-1-3h3z" fill={GREY} stroke="none" /></>],
  ['Quick calc', <><path d="M3 4v12l3-2 2 3 2-1-2-3h3z" fill="#e8e8e8" stroke="none" /><path d="M16 1l-6 1-4 5h4l-1 3 7-5h-3z" fill="#e8e8e8" stroke="none" /></>],
];

const Properties = () => (
  <section className="flex h-[465px] shrink-0 flex-col overflow-hidden border-t border-black">
    <PanelTitle>Properties</PanelTitle>
    <div className="flex h-[25px] shrink-0 pr-px">
      <label className="flex flex-1 items-center bg-[#1d1e20] pr-2 pl-[5px]">
        <select aria-label="Selection" className="w-full appearance-none bg-transparent text-sm text-[#b8b8b8] outline-none"><option>Section view</option></select>
        <svg className="h-[5px] w-2.5 shrink-0" viewBox="0 0 10 5" aria-hidden="true"><path d="M0 0h10L5 5z" fill="#d0d0d0" /></svg>
      </label>
      {selectTools.map(([name, art]) => (
        <button key={name} type="button" aria-label={name} className="flex w-[25px] items-center justify-center border-l border-[#1b1b1b]">
          <Icon className="h-[18px] w-[18px]" box="0 0 18 18">{art}</Icon>
        </button>
      ))}
    </div>
    <div className="flex min-h-0 flex-1">
      <div className="min-h-0 flex-1 overflow-hidden">
        <table className="w-full table-fixed border-collapse text-sm leading-6 text-[#d0d0d0]">
          <colgroup>
            <col className="w-[25px]" />
            <col className="w-[126px]" />
            <col />
          </colgroup>
          {propertyGroups.map((group) => (
            <tbody key={group.title}>
              <tr className="h-[25px]">
                <td><Expander className="ml-2 h-[9px] w-[9px]" /></td>
                <th colSpan={2} className="pl-1 text-left font-bold">{group.title}</th>
              </tr>
              {group.rows.map(([name, value, muted]) => (
                <tr key={name} className={`h-[25px] ${muted ? 'text-[#858585]' : ''}`}>
                  <td />
                  <th scope="row" className="border-b border-[#262827] bg-[#2b2c2c] pl-1 text-left font-normal whitespace-nowrap">{name}</th>
                  <td className="border-b border-l border-[#262827] bg-[#2b2c2c] pl-[3px] whitespace-nowrap">{value}</td>
                </tr>
              ))}
            </tbody>
          ))}
        </table>
      </div>
      <div className="flex w-[19px] flex-col items-center bg-[#1b1c1c]">
        <div className="flex h-[266px] w-full flex-col items-center bg-[#272928] pt-2">
          <svg className="h-1.5 w-3" viewBox="0 0 12 6" aria-hidden="true"><path d="M0 6h12L6 0z" fill="#000" /></svg>
          <span className="mt-[126px] h-2 w-0.5 bg-[repeating-linear-gradient(#707070_0_2px,transparent_2px_3px)]" />
        </div>
        <div className="mt-auto flex h-[21px] w-full items-center justify-center bg-[#272928]">
          <svg className="h-1.5 w-3" viewBox="0 0 12 6" aria-hidden="true"><path d="M0 0h12L6 6z" fill="#000" /></svg>
        </div>
      </div>
    </div>
  </section>
);

/* ---------- drawing area ---------- */

const MINOR = 12.07;
const lines = Array.from({ length: 220 }, (_, i) => i);

const Drawing = () => (
  <svg className="absolute inset-0 h-full w-full" aria-label="Section drawing">
    <g transform="translate(-307 -187)">
      <g shapeRendering="crispEdges" strokeWidth="1">
        {lines.map((i) => {
          const x = Math.round(288 + i * MINOR) + 0.5;
          return <line key={`v${i}`} x1={x} x2={x} y1="0" y2="2000" stroke={i % 5 === 0 ? '#2c2c2c' : '#181818'} />;
        })}
        {lines.map((i) => {
          const y = Math.round(157 + i * MINOR) + 0.5;
          return <line key={`h${i}`} x1="0" x2="3000" y1={y} y2={y} stroke={i % 5 === 0 ? '#2c2c2c' : '#181818'} />;
        })}
      </g>
      <rect x="770.5" y="218.5" width="382" height="710" fill="none" stroke="#00123f" strokeWidth="5" />
      <rect x="770.5" y="218.5" width="382" height="710" fill="none" stroke="#3a68b8" strokeWidth="1" />
      <g fill="#0040ff">
        <rect x="759" y="207" width="23" height="23" />
        <rect x="1141" y="207" width="23" height="23" />
        <rect x="1141" y="917" width="23" height="23" />
        <rect x="759" y="917" width="23" height="23" />
        <rect x="944" y="213" width="35" height="10" />
        <rect x="944" y="923" width="35" height="10" />
        <rect x="1147" y="556" width="11" height="35" />
      </g>
      <path d="M759 917l23 23M782 917l-23 23" fill="none" stroke="#1a0010" strokeWidth="3" />
      <path d="M757.5 915.5h26v26h-26zM759 917l23 23M782 917l-23 23" fill="none" stroke="#e80000" />
      <g fill="none" stroke="#fff">
        <path d="M696.5 273v251M445 524.5h251" />
        <path d="M331.5 920.5h14v14h-14zM338.5 927.500V863M331.500 862.500h14l-7-22zM338.5 927.500H403M403.5 920.500v14l22-7z" />
      </g>
      <g fill="#fff" fontFamily="Open Sans, sans-serif" fontWeight="300" fontSize="20" textAnchor="middle">
        <text x="338" y="825">Y</text>
        <text x="447" y="935">X</text>
      </g>
    </g>
  </svg>
);

const navArrows = [
  ['First layout', 'M2.500 1v8M9 1v8L4 5z'],
  ['Previous layout', 'M7 1v8L3 5z'],
  ['Next layout', 'M3 1v8l4-4z'],
  ['Last layout', 'M8.500 1v8M2 1v8l5-4z'],
];

const Workspace = () => (
  <main className="flex min-w-0 flex-1 flex-col border-x border-black bg-[#1b1b1b]">
    <div className="flex h-[25px] shrink-0 items-center gap-px border-r border-[#333] pr-[5px] pl-px text-sm text-[#b8b8b8]">
      <button type="button" className="h-[22px] w-[41px] bg-[#2c2f2e]">Base</button>
      <div className="flex h-[22px] items-center bg-[#3e3e3e]">
        <span className="h-5 w-0.5 bg-[#1abc9c]" />
        <button type="button" className="px-1.5 font-bold">T-Sha...PLB_6</button>
        <button type="button" aria-label="Close tab" className="mr-1.5 ml-1"><CrossIcon className="h-3 w-3" /></button>
      </div>
      <button type="button" aria-label="New tab" className="flex h-[22px] w-5 items-center justify-center bg-[#2c2f2e]">
        <Icon className="h-3 w-3" box="0 0 12 12"><path d="M0 6h12M6 0v12" strokeWidth="2" /></Icon>
      </button>
      <button type="button" aria-label="Tab list" className="ml-auto">
        <svg className="h-1.5 w-[11px]" viewBox="0 0 12 6" aria-hidden="true"><path d="M0 0h12L6 6z" fill="#fff" /></svg>
      </button>
    </div>
    <div className="relative mx-0.5 min-h-0 flex-1 border-2 border-[#00bcc8] bg-black">
      <Drawing />
      <p className="absolute top-px left-px bg-[#505050]/60 pr-4 pl-3 font-['Liberation_Sans',sans-serif] text-xs leading-[25px] text-white">
        CIM Mode &gt; Point Library &gt; T-Shape Pier-4Piles_PLB_6
      </p>
      <div className="absolute -right-0.5 bottom-0 flex items-end">
        <output className="mr-1 mb-0.5 h-[25px] w-[181px] rounded-[3px] border border-[#3c3e3d] bg-[#262827] text-center font-['Noto_Sans',sans-serif] text-xs leading-[25px] text-[#d0d0d0]">
          -6.1285,-25.4688,0.0000
        </output>
        <button type="button" aria-label="View cube" className="flex h-[30px] w-[30px] items-center justify-center bg-[#262827]">
          <svg className="h-[18px] w-[18px]" viewBox="0 0 18 18" fill="#f0f0f0" aria-hidden="true">
            <rect x="0" y="0" width="8" height="8" rx="1" /><rect x="10" y="0" width="8" height="8" rx="1" />
            <rect x="0" y="10" width="8" height="8" rx="1" /><rect x="10" y="10" width="8" height="8" rx="1" />
          </svg>
        </button>
      </div>
    </div>
    <div className="flex h-[26px] shrink-0 items-center gap-0.5 border-b border-[#4a4a4a] bg-[#1b1c1d] pl-[3px] text-[11px]">
      {navArrows.map(([name, d]) => (
        <button key={name} type="button" aria-label={name} className="flex h-5 w-5 items-center justify-center bg-[#313236]">
          <svg className="h-2.5 w-2.5" viewBox="0 0 10 10" fill={GREY} stroke={GREY} aria-hidden="true"><path d={d} /></svg>
        </button>
      ))}
      <button type="button" className="h-5 w-[73px] bg-[#3e3f3f] pr-3 font-bold text-[#c8c8c8] [clip-path:polygon(0_0,100%_0,73%_100%,0_100%)]">Model</button>
      <button type="button" className="-ml-3 h-5 w-20 bg-[#232524] pr-2 text-[#7c7c7c] [clip-path:polygon(20%_0,100%_0,80%_100%,0_100%)]">Layout1</button>
      <span className="h-2.5 w-px bg-[#ddd]" />
      <span className="-ml-0.5 h-5 w-5 bg-[#313236]" />
    </div>
    <div className="flex h-[86px] shrink-0 border-t border-black bg-[#161718] font-['Liberation_Sans',sans-serif] text-[15px] text-[#c8c8c8]">
      <div className="flex w-6 shrink-0 flex-col items-center bg-[#2e2f33] pt-1">
        <span className="h-[3px] w-3.5 bg-[repeating-linear-gradient(90deg,#c4c4c4_0_1px,transparent_1px_2px)]" />
        <Icon className="mt-2 h-3 w-2.5" box="0 0 10 12"><path d="M0 2h10M0 6h10M0 10h10" stroke="#f0f0f0" strokeWidth="2" /></Icon>
      </div>
      <div className="flex min-w-0 flex-1 flex-col">
        <div className="flex h-[52px] flex-col justify-end border-b border-[#38393a] pl-px leading-[18px]">
          <p>Command:</p>
          <p>Command:</p>
          <p>Specify opposite corner:</p>
        </div>
        <label className="flex flex-1 items-center pl-2">
          <Icon className="mr-[7px] h-4 w-4" box="0 0 16 16">
            <rect width="16" height="16" rx="2" fill={GREY} stroke="none" />
            <path d="M3 4.500l4 3.500-4 3.500M8 12h5" stroke="#333" />
          </Icon>
          Command:
          <input type="text" aria-label="Command" className="ml-1 min-w-0 flex-1 bg-transparent outline-none" />
        </label>
      </div>
    </div>
  </main>
);

/* ---------- callout marks over the window ---------- */

const Callout = () => (
  <svg className="pointer-events-none absolute inset-0 h-full w-full" fill="none" stroke="#ff4444" aria-hidden="true">
    <path d="M5.500 613.500h295v178h-295z" strokeWidth="5" strokeDasharray="15 5" />
    <path d="M558.500 284.500h577v585h-577z" strokeWidth="5" />
    <g strokeWidth="10" className="drop-shadow-[1px_3px_2px_rgba(0,0,0,0.6)]">
      <path d="M4 612 558.500 290" />
      <path d="M12 794.500 558.500 865.500" />
    </g>
  </svg>
);

const App = () => (
  <div className="relative flex h-screen flex-col overflow-hidden border-b-2 border-l-2 border-[#f2f2f2] bg-[#272928]">
    <TitleBar />
    <ComboBar />
    <div className="flex h-[35px] shrink-0 items-center pl-[3px]">
      <ToolGroup tools={drawTools} wide />
      <ToolGroup tools={dimTools} />
      <ToolGroup tools={modelTools} />
      <ToolGroup tools={tableTools} />
      <ToolGroup tools={viewTools} />
    </div>
    <div className="flex h-[34px] shrink-0 bg-[#1b1b1b]">
      <div className="flex items-center bg-[#272928] pr-0.5 pl-[3px]">
        <ToolGroup tools={editTools} overflow={false} />
      </div>
    </div>
    <div className="flex min-h-0 flex-1 font-['Open_Sans','Noto_Sans',sans-serif]">
      <aside className="flex w-[300px] shrink-0 flex-col bg-[#262827]">
        <CimView />
        <ObjectPanel />
      </aside>
      <Workspace />
      <aside className="flex w-[300px] shrink-0 flex-col bg-[#262827]">
        <CadView />
        <Properties />
      </aside>
    </div>
    <div className="h-[5px] shrink-0" />
    <div className="absolute inset-y-0 -left-0.5 right-0 font-['Open_Sans','Noto_Sans',sans-serif]">
      <EnlargedObject />
      <Callout />
    </div>
  </div>
);

export default App;
